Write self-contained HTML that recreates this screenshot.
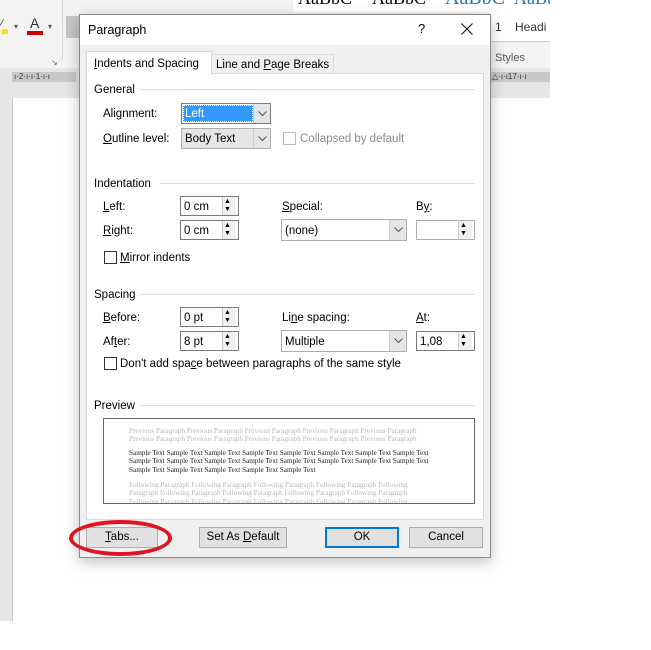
<!DOCTYPE html>
<html><head><style>
*{box-sizing:border-box;margin:0;padding:0}
body{width:651px;height:650px;position:relative;background:#fff;font-family:"Liberation Sans",sans-serif;font-size:11.5px;color:#000;overflow:hidden}
.a{position:absolute}
.t{position:absolute;white-space:nowrap;line-height:14px}
.u{text-decoration:underline}
.box{position:absolute;background:#fff;border:1px solid #7a7a7a}
.spin{position:absolute;width:14px;border-left:1px solid #ccc;background:#f0f0f0}
.btn{position:absolute;background:#e1e1e1;border:1px solid #adadad;text-align:center;line-height:19px}
.cb{position:absolute;width:13px;height:13px;border:1px solid #333;background:#fff}
.hr{position:absolute;height:1px;background:#dcdcdc}
.dd{position:absolute;width:17px;background:#e5e5e5;border-left:1px solid #ccc}
.dd svg{position:absolute;left:4px;top:50%;margin-top:-3px}
.pv{font-family:"Liberation Serif",serif;font-size:7.2px;line-height:8.3px;white-space:nowrap}
</style></head><body>
<div class="a" style="left:0;top:0;width:550px;height:68px;background:#f3f3f3"></div>
<div class="a" style="left:0;top:68px;width:550px;height:553px;background:#e6e6e6"></div>
<div class="a" style="left:12px;top:72px;width:64px;height:10px;background:#c8c8c8"></div>
<div class="t" style="left:14px;top:70px;font-size:8px;color:#333">ı·2·ı·ı·1·ı·ı</div>
<div class="a" style="left:490px;top:72px;width:60px;height:10px;background:#c8c8c8"></div>
<div class="t" style="left:492px;top:70px;font-size:8px;color:#333">△·ı·ı17·ı·ı</div>
<div class="a" style="left:12px;top:98px;width:538px;height:523px;background:#fff;border-left:1px solid #c8c8c8"></div>
<div class="a" style="left:2px;top:29px;width:6px;height:5px;background:#f5e400"></div>
<div class="t" style="left:0;top:17px;font-size:14px;color:#555">⁄</div>
<div class="t" style="left:30px;top:16px;font-size:14px;color:#333">A</div>
<div class="a" style="left:27px;top:31px;width:16px;height:4px;background:#c00"></div>
<div class="t" style="left:14px;top:20px;font-size:8px;color:#555">▾</div>
<div class="t" style="left:48px;top:20px;font-size:8px;color:#555">▾</div>
<div class="a" style="left:66px;top:16px;width:13px;height:22px;background:#c6c6c6"></div>
<div class="t" style="left:51px;top:56px;font-size:8px;color:#666">↘</div>
<div class="a" style="left:62px;top:0;width:1px;height:60px;background:#d6d6d6"></div>
<div class="a" style="left:293px;top:0;width:257px;height:12px;background:#fff;overflow:hidden">
<div class="t" style="left:5px;top:-9px;font-family:'Liberation Serif',serif;font-size:18px">AaBbC</div>
<div class="t" style="left:79px;top:-9px;font-family:'Liberation Serif',serif;font-size:18px">AaBbC</div>
<div class="t" style="left:152px;top:-9px;font-family:'Liberation Serif',serif;font-size:20px;color:#2e74b5">AaBbC</div>
<div class="t" style="left:221px;top:-9px;font-family:'Liberation Serif',serif;font-size:18px;color:#2e74b5">AaBt</div>
</div>
<div class="a" style="left:490px;top:12px;width:60px;height:30px;background:#fff;border-bottom:1px solid #d0d0d0"></div>
<div class="t" style="left:495px;top:20px;font-size:12px;color:#333">1&nbsp;&nbsp;&nbsp;&nbsp;Headi</div>
<div class="t" style="left:495px;top:51px;font-size:11px;color:#555">Styles</div>
<!-- dialog -->
<div class="a" style="left:79px;top:14px;width:412px;height:544px;background:#f0f0f0;border:1px solid #8a8a8a;box-shadow:0 4px 14px rgba(0,0,0,.25)"></div>
<div class="a" style="left:80px;top:15px;width:410px;height:30px;background:#fff"></div>
<div class="t" style="left:88px;top:23px;font-size:12.5px">Paragraph</div>
<div class="t" style="left:418px;top:22px;font-size:13px">?</div>
<svg class="a" style="left:461px;top:23px" width="12" height="12"><path d="M0.5 0.5L11.5 11.5M11.5 0.5L0.5 11.5" stroke="#111" stroke-width="1.1"/></svg>
<div class="a" style="left:211px;top:54px;width:123px;height:20px;background:#f0f0f0;border:1px solid #d9d9d9"></div>
<div class="t" style="left:216px;top:58px">Line and <span class="u">P</span>age Breaks</div>
<div class="a" style="left:86px;top:73px;width:398px;height:447px;background:#fff;border:1px solid #d9d9d9"></div>
<div class="a" style="left:86px;top:51px;width:126px;height:24px;background:#fff;border:1px solid #d9d9d9;border-bottom:none"></div>
<div class="t" style="left:94px;top:57px"><span class="u">I</span>ndents and Spacing</div>
<div class="t" style="left:94px;top:83px">General</div><div class="hr" style="left:140px;top:89px;width:335px"></div>
<div class="t" style="left:103px;top:107px">Ali<span class="u">g</span>nment:</div>
<div class="box" style="left:181px;top:103px;width:90px;height:21px"></div>
<div class="a" style="left:183px;top:105px;width:70px;height:17px;background:#3399ff;border:1px dotted #fff"></div>
<div class="t" style="left:185px;top:107px;color:#fff">Left</div>
<div class="dd" style="left:253px;top:104px;height:19px"><svg width="9" height="6"><path d="M0.5 0.5L4.5 4.5L8.5 0.5" fill="none" stroke="#555"/></svg></div>
<div class="t" style="left:103px;top:132px"><span class="u">O</span>utline level:</div>
<div class="box" style="left:181px;top:128px;width:90px;height:21px;background:#e5e5e5;border-color:#adadad"></div>
<div class="t" style="left:185px;top:132px">Body Text</div>
<div class="dd" style="left:253px;top:129px;height:19px"><svg width="9" height="6"><path d="M0.5 0.5L4.5 4.5L8.5 0.5" fill="none" stroke="#555"/></svg></div>
<div class="cb" style="left:283px;top:132px;border-color:#bbb"></div>
<div class="t" style="left:300px;top:132px;color:#8a8a8a">Collapsed by default</div>
<div class="t" style="left:94px;top:177px">Indentation</div><div class="hr" style="left:160px;top:183px;width:315px"></div>
<div class="t" style="left:103px;top:200px"><span class="u">L</span>eft:</div>
<div class="box" style="left:180px;top:196px;width:59px;height:20px"></div><div class="t" style="left:184px;top:200px">0 cm</div>
<div class="spin" style="left:222px;top:197px;height:18px"></div><div class="t" style="left:224px;top:198px;font-size:7px;line-height:8px">▲<br>▼</div>
<div class="t" style="left:282px;top:200px"><span class="u">S</span>pecial:</div>
<div class="t" style="left:416px;top:200px">B<span class="u">y</span>:</div>
<div class="t" style="left:103px;top:224px"><span class="u">R</span>ight:</div>
<div class="box" style="left:180px;top:220px;width:59px;height:20px"></div><div class="t" style="left:184px;top:224px">0 cm</div>
<div class="spin" style="left:222px;top:221px;height:18px"></div><div class="t" style="left:224px;top:222px;font-size:7px;line-height:8px">▲<br>▼</div>
<div class="box" style="left:281px;top:219px;width:126px;height:22px;border-color:#adadad"></div><div class="t" style="left:285px;top:224px">(none)</div>
<div class="dd" style="left:389px;top:220px;height:20px"><svg width="9" height="6"><path d="M0.5 0.5L4.5 4.5L8.5 0.5" fill="none" stroke="#555"/></svg></div>
<div class="box" style="left:416px;top:220px;width:59px;height:20px;border-color:#adadad"></div>
<div class="spin" style="left:458px;top:221px;height:18px"></div><div class="t" style="left:460px;top:222px;font-size:7px;line-height:8px">▲<br>▼</div>
<div class="cb" style="left:104px;top:251px"></div>
<div class="t" style="left:120px;top:251px"><span class="u">M</span>irror indents</div>
<div class="t" style="left:94px;top:288px">Spacing</div><div class="hr" style="left:140px;top:294px;width:335px"></div>
<div class="t" style="left:103px;top:311px"><span class="u">B</span>efore:</div>
<div class="box" style="left:180px;top:307px;width:59px;height:20px"></div><div class="t" style="left:184px;top:311px">0 pt</div>
<div class="spin" style="left:222px;top:308px;height:18px"></div><div class="t" style="left:224px;top:309px;font-size:7px;line-height:8px">▲<br>▼</div>
<div class="t" style="left:282px;top:311px">Li<span class="u">n</span>e spacing:</div>
<div class="t" style="left:416px;top:311px"><span class="u">A</span>t:</div>
<div class="t" style="left:103px;top:335px">Af<span class="u">t</span>er:</div>
<div class="box" style="left:180px;top:331px;width:59px;height:20px"></div><div class="t" style="left:184px;top:335px">8 pt</div>
<div class="spin" style="left:222px;top:332px;height:18px"></div><div class="t" style="left:224px;top:333px;font-size:7px;line-height:8px">▲<br>▼</div>
<div class="box" style="left:281px;top:330px;width:126px;height:22px;border-color:#adadad"></div><div class="t" style="left:285px;top:335px">Multiple</div>
<div class="dd" style="left:389px;top:331px;height:20px"><svg width="9" height="6"><path d="M0.5 0.5L4.5 4.5L8.5 0.5" fill="none" stroke="#555"/></svg></div>
<div class="box" style="left:416px;top:331px;width:59px;height:20px"></div><div class="t" style="left:420px;top:335px">1,08</div>
<div class="spin" style="left:458px;top:332px;height:18px"></div><div class="t" style="left:460px;top:333px;font-size:7px;line-height:8px">▲<br>▼</div>
<div class="cb" style="left:104px;top:357px"></div>
<div class="t" style="left:120px;top:357px">Don't add spa<span class="u">c</span>e between paragraphs of the same style</div>
<div class="t" style="left:94px;top:399px">Preview</div><div class="hr" style="left:140px;top:405px;width:335px"></div>
<div class="a" style="left:103px;top:418px;width:372px;height:86px;border:1px solid #666;background:#fff;overflow:hidden">
<div class="pv" style="position:absolute;left:25px;top:8px;color:#b8b8b8">Previous Paragraph Previous Paragraph Previous Paragraph Previous Paragraph Previous Paragraph<br>Previous Paragraph Previous Paragraph Previous Paragraph Previous Paragraph Previous Paragraph</div>
<div class="pv" style="position:absolute;left:25px;top:30px;color:#222">Sample Text Sample Text Sample Text Sample Text Sample Text Sample Text Sample Text Sample Text<br>Sample Text Sample Text Sample Text Sample Text Sample Text Sample Text Sample Text Sample Text<br>Sample Text Sample Text Sample Text Sample Text Sample Text</div>
<div class="pv" style="position:absolute;left:25px;top:62px;color:#b8b8b8">Following Paragraph Following Paragraph Following Paragraph Following Paragraph Following<br>Paragraph Following Paragraph Following Paragraph Following Paragraph Following Paragraph<br>Following Paragraph Following Paragraph Following Paragraph Following Paragraph Following</div>
</div>
<div class="btn" style="left:86px;top:527px;width:72px;height:21px"><span class="u">T</span>abs...</div>
<div class="btn" style="left:199px;top:527px;width:88px;height:21px">Set As <span class="u">D</span>efault</div>
<div class="btn" style="left:325px;top:527px;width:74px;height:21px;border:2px solid #0078d7;line-height:17px">OK</div>
<div class="btn" style="left:409px;top:527px;width:74px;height:21px">Cancel</div>
<div class="a" style="left:69px;top:520px;width:103px;height:36px;border:4px solid #e0141e;border-radius:50%"></div>
</body></html>
